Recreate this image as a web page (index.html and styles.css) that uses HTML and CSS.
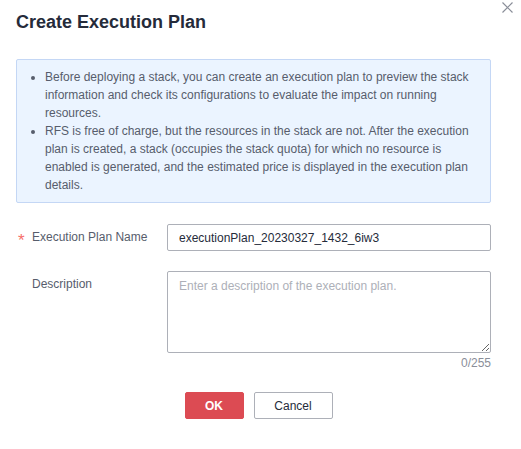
FILE: index.html
```html
<!DOCTYPE html>
<html>
<head>
<meta charset="utf-8">
<link rel="stylesheet" href="styles.css">
</head>
<body>
<div class="dialog">
  <button class="close" aria-label="close">
    <svg width="11" height="11" viewBox="0 0 11 11"><path d="M0.5 0.5 L10.5 10.5 M10.5 0.5 L0.5 10.5" stroke="#8a8e99" stroke-width="1.2" fill="none"/></svg>
  </button>
  <h1 class="title">Create Execution Plan</h1>
  <div class="notice">
    <ul class="notice-list">
      <li>Before deploying a stack, you can create an execution plan to preview the stack information and check its configurations to evaluate the impact on running resources.</li>
      <li>RFS is free of charge, but the resources in the stack are not. After the execution plan is created, a stack (occupies the stack quota) for which no resource is enabled is generated, and the estimated price is displayed in the execution plan details.</li>
    </ul>
  </div>
  <div class="form">
    <div class="row">
      <label class="label"><span class="req">*</span>Execution Plan Name</label>
      <div class="field"><input class="input" type="text" value="executionPlan_20230327_1432_6iw3"></div>
    </div>
    <div class="row">
      <label class="label">Description</label>
      <div class="field">
        <textarea class="textarea" placeholder="Enter a description of the execution plan."></textarea>
        <div class="counter">0/255</div>
      </div>
    </div>
  </div>
  <div class="actions">
    <button class="btn btn-primary">OK</button>
    <button class="btn btn-default">Cancel</button>
  </div>
</div>
</body>
</html>
```
FILE: styles.css
```css
html, body {
  margin: 0;
  padding: 0;
  background: #fff;
}
body {
  font-family: "Liberation Sans", Arial, sans-serif;
  font-size: 12px;
  color: #252b3a;
}
.dialog {
  position: relative;
  width: 521px;
  height: 449px;
  padding: 0 30px 0 16px;
  box-sizing: border-box;
}
.close {
  position: absolute;
  top: 2px;
  right: 8px;
  width: 11px;
  height: 11px;
  padding: 0;
  border: 0;
  background: none;
  line-height: 0;
}
.title {
  margin: 0;
  padding-top: 12px;
  height: 59px;
  box-sizing: border-box;
  font-size: 18px;
  line-height: 20px;
  font-weight: bold;
  color: #252b3a;
}
.notice {
  width: 475px;
  box-sizing: border-box;
  border: 1px solid #c4d7f5;
  border-radius: 2px;
  background: #ebf4ff;
  padding: 8px 16px 8px 0;
}
.notice-list {
  margin: 0;
  padding-left: 28px;
  color: #575d6c;
  line-height: 18px;
  font-size: 12px;
}
.form {
  margin-top: 21px;
}
.row {
  display: flex;
  align-items: flex-start;
  margin-bottom: 20px;
}
.label {
  width: 151px;
  flex: none;
  box-sizing: border-box;
  padding-left: 16px;
  position: relative;
  color: #575d6c;
  line-height: 27px;
}
.req {
  position: absolute;
  left: 2px;
  top: 3px;
  color: #f66f6a;
  font-size: 17px;
}
.field {
  width: 324px;
}
.input {
  display: block;
  width: 100%;
  height: 27px;
  box-sizing: border-box;
  border: 1px solid #adb0b8;
  border-radius: 2px;
  padding: 0 11px;
  font-family: inherit;
  font-size: 12px;
  color: #252b3a;
  outline: none;
}
.textarea {
  display: block;
  width: 100%;
  height: 82px;
  box-sizing: border-box;
  border: 1px solid #adb0b8;
  border-radius: 2px;
  padding: 6px 11px;
  font-family: inherit;
  font-size: 12px;
  line-height: 16px;
  color: #252b3a;
  outline: none;
  resize: vertical;
  margin: 0;
}
.textarea::placeholder {
  color: #adb0b8;
}
.counter {
  text-align: right;
  color: #8a8e99;
  line-height: 18px;
  margin-top: 1px;
}
.actions {
  display: flex;
  justify-content: center;
  gap: 10px;
  margin-top: 12px;
  padding-left: 10px;
}
.btn {
  height: 27px;
  box-sizing: border-box;
  border-radius: 2px;
  font-family: inherit;
  font-size: 12px;
  padding: 0;
}
.btn-primary {
  width: 59px;
  background: #dc4b53;
  border: 1px solid #dc4b53;
  color: #fff;
  font-weight: bold;
}
.btn-default {
  width: 79px;
  background: #fff;
  border: 1px solid #adb0b8;
  color: #252b3a;
}
```
